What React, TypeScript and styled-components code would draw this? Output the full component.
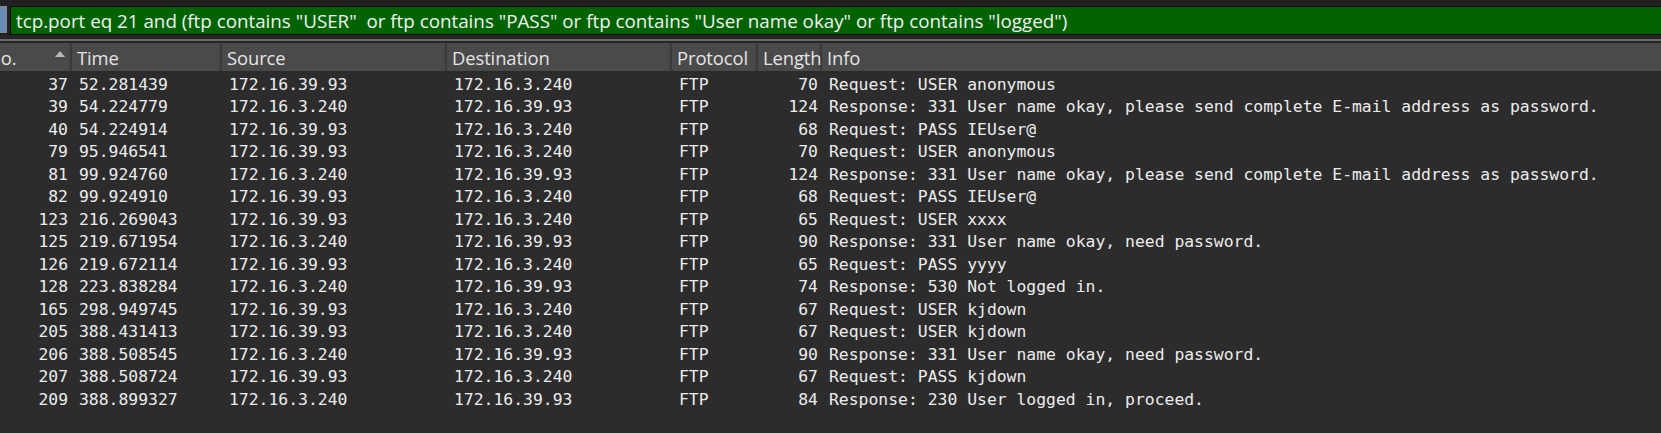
import React from "react";
import styled, { createGlobalStyle } from "styled-components";

const Global = createGlobalStyle`
  html, body { margin: 0; padding: 0; background: #2c2c2c; }
  body { width: 1661px; height: 433px; overflow: hidden; }
  #root { width: 1661px; height: 433px; }
`;

const Page = styled.div`
  width: 1661px;
  height: 433px;
  background: #2c2c2c;
  display: flex;
  flex-direction: column;
  overflow: hidden;
`;

const FilterBar = styled.div`
  height: 35px;
  background: #212121;
  display: flex;
  align-items: flex-end;
  box-sizing: border-box;
  padding-top: 6px;
`;

const Bookmark = styled.div`
  width: 7px;
  height: 27px;
  margin-bottom: 2px;
  box-sizing: border-box;
  background: #6b8db5;
  border: 1px solid #8a8a8a;
  border-left: none;
  margin-right: 3px;
`;

const FilterInput = styled.div`
  flex: 1;
  height: 29px;
  box-sizing: border-box;
  background: #006300;
  border: 1px solid #0a0a0a;
  border-right: none;
  display: flex;
  align-items: center;
  padding-left: 5px;
  color: #f2f2f2;
  font-family: "Open Sans", "Noto Sans", sans-serif;
  font-size: 18.8px;
  white-space: pre;
`;

const Splitter = styled.div`
  height: 8px;
  background: #262626;
  display: flex;
  flex-direction: column;
  justify-content: flex-end;
`;

const SplitLine = styled.div`
  height: 2px;
  background: #6a6a6a;
  margin-bottom: 2px;
`;

const Scroller = styled.div`
  flex: 1;
  overflow: hidden;
  background: #2c2c2c;
`;

const Table = styled.div`
  margin-left: -18px;
  width: calc(100% + 18px);
  display: flex;
  flex-direction: column;
`;

const widths = [90, 150, 225, 225, 86, 64];

const HeaderRow = styled.div`
  height: 28px;
  background: #4a4a4a;
  border-bottom: 2px solid #2a2a2a;
  display: flex;
`;

const HeaderCell = styled.div<{ $w?: number; $last?: boolean }>`
  position: relative;
  ${(p) => (p.$w ? `width: ${p.$w}px; flex: none;` : "flex: 1;")}
  box-sizing: border-box;
  padding-left: 5px;
  display: flex;
  align-items: center;
  color: #e4e4e4;
  font-family: "Open Sans", "Noto Sans", sans-serif;
  font-size: 18.4px;
  letter-spacing: -0.1px;
  white-space: nowrap;
  overflow: hidden;
  border-right: ${(p) => (p.$last ? "none" : "1px solid #363636")};
  box-shadow: ${(p) => (p.$last ? "none" : "inset -2px 0 0 #414141")};
`;

const SortArrow = styled.span`
  position: absolute;
  right: 6px;
  top: 8px;
  width: 0;
  height: 0;
  border-left: 5px solid transparent;
  border-right: 5px solid transparent;
  border-bottom: 6px solid #b8b8b8;
`;

const Body = styled.div`
  display: flex;
  flex-direction: column;
`;

const Row = styled.div`
  height: 22.5px;
  display: flex;
  align-items: center;
`;

const Cell = styled.div<{ $w?: number; $right?: boolean }>`
  ${(p) => (p.$w ? `width: ${p.$w}px; flex: none;` : "flex: 1;")}
  box-sizing: border-box;
  padding: ${(p) => (p.$right ? "0 4px 0 0" : "0 0 0 7px")};
  text-align: ${(p) => (p.$right ? "right" : "left")};
  color: #ececec;
  font-family: "DejaVu Sans Mono", "Liberation Mono", monospace;
  font-size: 16.4px;
  white-space: pre;
  overflow: hidden;
`;

type Pkt = [string, string, string, string, string, string, string];

const A = "172.16.39.93";
const B = "172.16.3.240";

const rows: Pkt[] = [
  ["37", "52.281439", A, B, "FTP", "70", "Request: USER anonymous"],
  ["39", "54.224779", B, A, "FTP", "124", "Response: 331 User name okay, please send complete E-mail address as password."],
  ["40", "54.224914", A, B, "FTP", "68", "Request: PASS IEUser@"],
  ["79", "95.946541", A, B, "FTP", "70", "Request: USER anonymous"],
  ["81", "99.924760", B, A, "FTP", "124", "Response: 331 User name okay, please send complete E-mail address as password."],
  ["82", "99.924910", A, B, "FTP", "68", "Request: PASS IEUser@"],
  ["123", "216.269043", A, B, "FTP", "65", "Request: USER xxxx"],
  ["125", "219.671954", B, A, "FTP", "90", "Response: 331 User name okay, need password."],
  ["126", "219.672114", A, B, "FTP", "65", "Request: PASS yyyy"],
  ["128", "223.838284", B, A, "FTP", "74", "Response: 530 Not logged in."],
  ["165", "298.949745", A, B, "FTP", "67", "Request: USER kjdown"],
  ["205", "388.431413", A, B, "FTP", "67", "Request: USER kjdown"],
  ["206", "388.508545", B, A, "FTP", "90", "Response: 331 User name okay, need password."],
  ["207", "388.508724", A, B, "FTP", "67", "Request: PASS kjdown"],
  ["209", "388.899327", B, A, "FTP", "84", "Response: 230 User logged in, proceed."],
];

const headers = ["No.", "Time", "Source", "Destination", "Protocol", "Length", "Info"];

export default function App() {
  return (
    <Page>
      <Global />
      <FilterBar>
        <Bookmark />
        <FilterInput>
          {'tcp.port eq 21 and (ftp contains "USER"  or ftp contains "PASS" or ftp contains "User name okay" or ftp contains "logged")'}
        </FilterInput>
      </FilterBar>
      <Splitter>
        <SplitLine />
      </Splitter>
      <Scroller>
        <Table>
          <HeaderRow>
            {headers.map((h, i) => (
              <HeaderCell key={h} $w={widths[i]} $last={i === headers.length - 1}>
                {h}
                {i === 0 && <SortArrow />}
              </HeaderCell>
            ))}
          </HeaderRow>
          <Body>
            {rows.map((r) => (
              <Row key={r[0]}>
                <Cell $w={widths[0]} $right>{r[0]}</Cell>
                <Cell $w={widths[1]}>{r[1]}</Cell>
                <Cell $w={widths[2]}>{r[2]}</Cell>
                <Cell $w={widths[3]}>{r[3]}</Cell>
                <Cell $w={widths[4]}>{r[4]}</Cell>
                <Cell $w={widths[5]} $right>{r[5]}</Cell>
                <Cell>{r[6]}</Cell>
              </Row>
            ))}
          </Body>
        </Table>
      </Scroller>
    </Page>
  );
}
